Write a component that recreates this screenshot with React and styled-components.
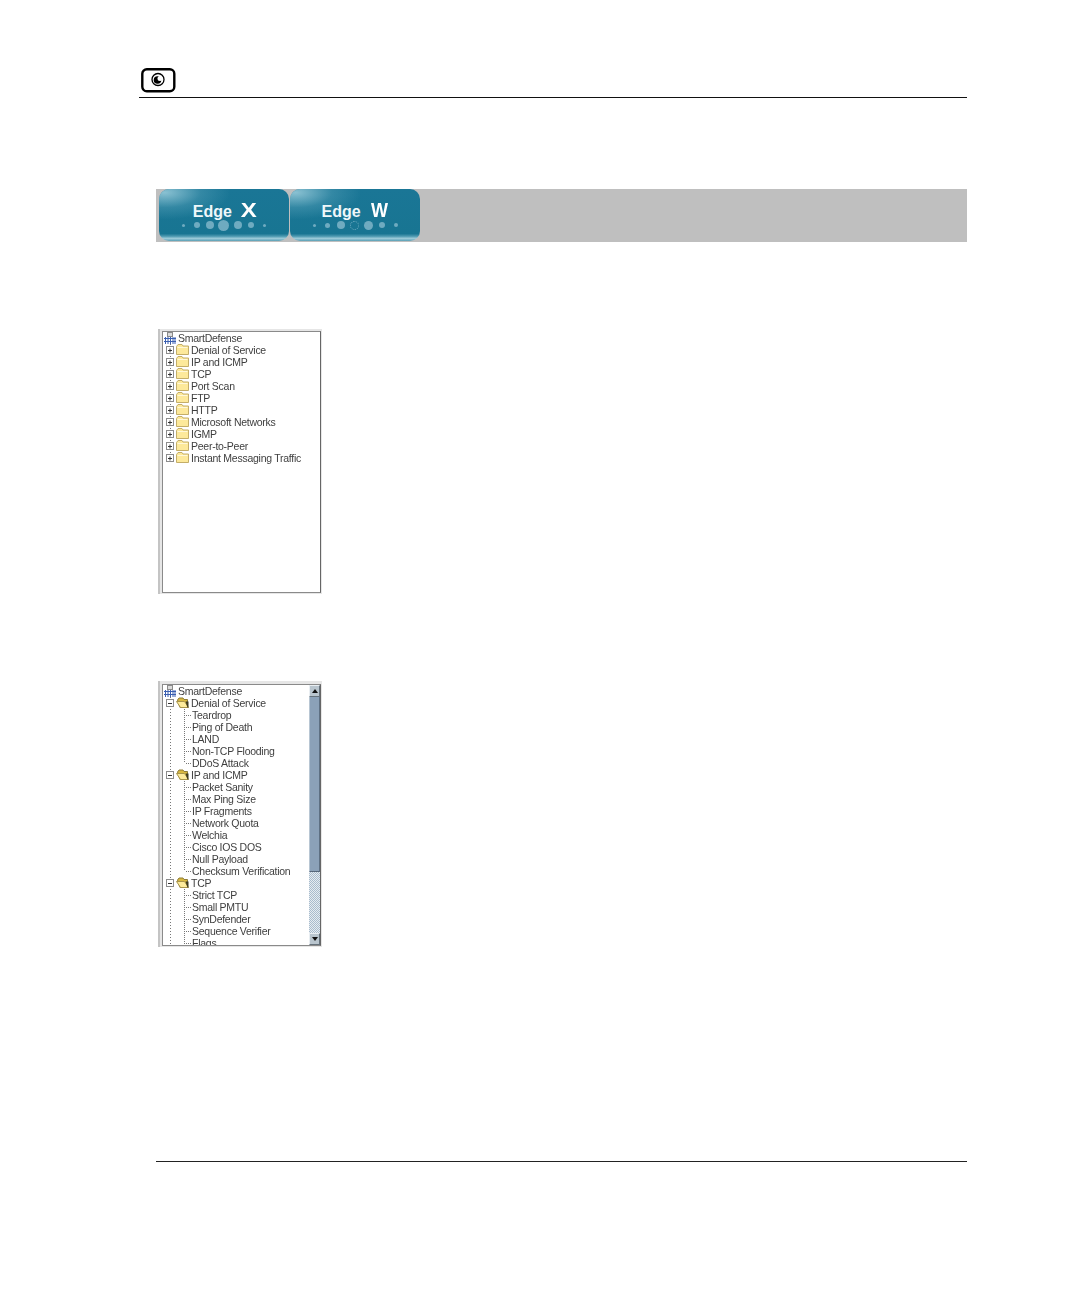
import React from "react";
import styled, { createGlobalStyle } from "styled-components";

const Global = createGlobalStyle`
  html, body { margin: 0; padding: 0; background: #fff; }
  body { font-family: "Liberation Sans", Arial, sans-serif; }
`;

const Page = styled.div`
  width: 1078px;
  height: 1304px;
  box-sizing: border-box;
  padding: 68px 111px 0 0;
  display: flex;
  flex-direction: column;
  overflow: hidden;
`;

const Header = styled.header`
  margin-left: 139px;
  height: 30px;
  box-sizing: border-box;
  border-bottom: 1px solid #111;
  padding-left: 2px;
`;

const Banner = styled.div`
  margin: 91px 0 0 156px;
  height: 53px;
  box-sizing: border-box;
  background: #bfbfbf;
  padding: 0 0 1px 3px;
  display: flex;
  gap: 1px;
`;

const Tab = styled.div`
  position: relative;
  width: 130px;
  height: 52px;
  box-sizing: border-box;
  border-radius: 10px;
  overflow: hidden;
  background: linear-gradient(to bottom, #1a7696 0%, #187592 86%, #4f9ab1 91%, #9ccbd9 95%, #5a9fb5 100%);
  display: flex;
  flex-direction: column;
  align-items: center;
  padding-top: 9px;

  &::before {
    content: "";
    position: absolute;
    left: 0;
    top: 0;
    width: 70px;
    height: 30px;
    background: radial-gradient(ellipse at 8% 12%, rgba(175, 218, 230, 0.75) 0%, rgba(100, 170, 192, 0.35) 40%, rgba(26, 118, 150, 0) 72%);
  }
`;

const TabTitle = styled.div`
  position: relative;
  display: flex;
  align-items: baseline;
  gap: ${(p) => p.$gap}px;
  color: #eef7fa;
  font-size: 16px;
  font-weight: 700;
  line-height: 24px;
`;

const TabLetter = styled.span`
  display: inline-block;
  font-size: 20px;
  color: #fff;
  transform: scaleX(${(p) => p.$scale});
`;

const Dots = styled.div`
  position: relative;
  margin-top: -5px;
  width: 93px;
  height: 12px;
  display: flex;
  justify-content: space-between;
  align-items: center;
`;

const DotCell = styled.span`
  width: 11px;
  display: flex;
  justify-content: center;
`;

const Dot = styled.span`
  width: ${(p) => p.$size}px;
  height: ${(p) => p.$size}px;
  border-radius: 50%;
  box-sizing: border-box;
  background: ${(p) => p.$ring ? "transparent" : "#6fabc0"};
  border: ${(p) => p.$ring ? "1px dotted #6fabc0" : "none"};
`;

const Panel = styled.div`
  width: 164px;
  height: ${(p) => p.$height}px;
  margin: ${(p) => p.$top}px 0 0 158px;
  box-sizing: border-box;
  background: #e6e6e6;
  border-left: 2px solid #c4c4c4;
  padding: ${(p) => p.$pad}px 1px 1px 2px;
  display: flex;
`;

const Inset = styled.div`
  flex: 1;
  min-width: 0;
  box-sizing: border-box;
  background: #fff;
  border: 1px solid #8a8a8a;
  border-right-color: #666;
  display: flex;
  overflow: hidden;
`;

const Tree = styled.div`
  flex: 1;
  min-width: 0;
  overflow: hidden;
  background-image: repeating-linear-gradient(to bottom, #777 0 1px, transparent 1px 3px);
  background-size: 1px ${(p) => p.$guide}px;
  background-position: 7px 12px;
  background-repeat: no-repeat;
`;

const Row = styled.div`
  height: 12px;
  display: flex;
  align-items: center;
  padding-left: ${(p) => p.$indent}px;
  font-size: 10.5px;
  letter-spacing: -0.26px;
  color: #3e3e3e;
  white-space: nowrap;
  filter: blur(0.25px);
`;

const RootIcon = styled.svg`
  width: 12px;
  height: 12px;
  margin-right: 2px;
  flex: none;
`;

const Expander = styled.svg`
  width: 8px;
  height: 8px;
  margin-right: 2px;
  flex: none;
`;

const FolderIcon = styled.svg`
  width: 13px;
  height: 11px;
  margin: 0 2px 1px 0;
  flex: none;
`;

const LeafLine = styled.span`
  position: relative;
  width: 7px;
  height: 12px;
  flex: none;
  margin-right: 1px;

  &::before {
    content: "";
    position: absolute;
    left: 0;
    top: 0;
    width: 1px;
    height: ${(p) => p.$last ? 6 : 12}px;
    background: repeating-linear-gradient(to bottom, #777 0 1px, transparent 1px 2px);
  }

  &::after {
    content: "";
    position: absolute;
    left: 1px;
    top: 6px;
    width: 6px;
    height: 1px;
    background: repeating-linear-gradient(to right, transparent 0 1px, #777 1px 2px);
  }
`;

const Scrollbar = styled.div`
  width: 11px;
  flex: none;
  display: flex;
  flex-direction: column;
`;

const ScrollButton = styled.div`
  height: 12px;
  flex: none;
  box-sizing: border-box;
  background: #b9c5ce;
  border: 1px solid;
  border-color: #e9eef2 #66727c #66727c #e9eef2;
  display: flex;
  align-items: center;
  justify-content: center;

  &::after {
    content: "";
    border-left: 3px solid transparent;
    border-right: 3px solid transparent;
    ${(p) => p.$down ? "border-top: 4px solid #111;" : "border-bottom: 4px solid #111;"}
  }
`;

const ScrollThumb = styled.div`
  height: 175px;
  flex: none;
  box-sizing: border-box;
  background: #8ba1b8;
  border-left: 1px solid #b8c6d3;
  border-bottom: 1px solid #56677a;
  border-right: 1px solid #5e7083;
`;

const ScrollTrack = styled.div`
  flex: 1;
  background-color: #dce4ea;
  background-image: repeating-conic-gradient(#a9bccd 0 25%, #e6ecf1 0 50%);
  background-size: 2px 2px;
`;

const Footer = styled.footer`
  margin: 214px 0 0 156px;
  border-top: 1px solid #222;
`;

function Logo() {
  return (
    <svg width="35" height="25" viewBox="0 0 35 25">
      <rect x="1.3" y="1.3" width="32" height="22" rx="4.5" fill="#fff" stroke="#000" strokeWidth="2.4" />
      <circle cx="17" cy="11.5" r="6" fill="#fff" stroke="#000" strokeWidth="1.3" />
      <circle cx="16.5" cy="12" r="3.8" fill="#000" />
      <circle cx="19" cy="10.4" r="2.5" fill="#fff" />
    </svg>
  );
}

function EdgeTab({ letter, gap, scale, dots }) {
  return (
    <Tab>
      <TabTitle $gap={gap}>
        Edge <TabLetter $scale={scale}>{letter}</TabLetter>
      </TabTitle>
      <Dots>
        {dots.map((d, i) => (
          <DotCell key={i}>
            <Dot $size={d.size} $ring={d.ring} />
          </DotCell>
        ))}
      </Dots>
    </Tab>
  );
}

function Root() {
  return (
    <Row $indent={1}>
      <RootIcon viewBox="0 0 12 12">
        <rect x="3.5" y="0.5" width="5" height="4" fill="#dcdcdc" stroke="#8a8a8a" />
        <path d="M1.5 5V12M4 5V12M6.5 5V12M9 5V12M11 5V12M0 6.5H12M0 9.5H12" stroke="#3a5fb0" fill="none" />
      </RootIcon>
      SmartDefense
    </Row>
  );
}

function Box({ open }) {
  return (
    <Expander viewBox="0 0 8 8">
      <rect x="0.5" y="0.5" width="7" height="7" fill="#fff" stroke="#8c8c8c" />
      <path d={open ? "M2 4.5H6" : "M2 4.5H6M4 2.5V6.5"} stroke="#333" />
    </Expander>
  );
}

function ClosedFolder() {
  return (
    <FolderIcon viewBox="0 0 13 11">
      <path d="M0.5 2.5 L2 0.5H6L7 2H12.5V10.5H0.5Z" fill="#fde99a" stroke="#c4ae68" />
      <path d="M1.5 3.5H11.5" stroke="#fff8d8" />
    </FolderIcon>
  );
}

function OpenFolder() {
  return (
    <FolderIcon viewBox="0 0 13 11">
      <path d="M1.5 3 L3 1H7L8 2.5H11.5V10.5H4Z" fill="#d9b93f" stroke="#8f7d38" />
      <path d="M0.5 4.5H8.5L12.5 10.5H4.5Z" fill="#fdeb9c" stroke="#a8954c" />
      <path d="M9.5 4.5 L12.5 4.5V10.5H11.5Z" fill="#3d3a1e" />
    </FolderIcon>
  );
}

function Branch({ open, label }) {
  return (
    <Row $indent={3}>
      <Box open={open} />
      {open ? <OpenFolder /> : <ClosedFolder />}
      {label}
    </Row>
  );
}

function Leaf({ label, last }) {
  return (
    <Row $indent={21}>
      <LeafLine $last={last} />
      {label}
    </Row>
  );
}

const closedFolders = [
  "Denial of Service", "IP and ICMP", "TCP", "Port Scan", "FTP", "HTTP",
  "Microsoft Networks", "IGMP", "Peer-to-Peer", "Instant Messaging Traffic",
];

const openFolders = [
  { label: "Denial of Service", items: ["Teardrop", "Ping of Death", "LAND", "Non-TCP Flooding", "DDoS Attack"] },
  { label: "IP and ICMP", items: ["Packet Sanity", "Max Ping Size", "IP Fragments", "Network Quota", "Welchia", "Cisco IOS DOS", "Null Payload", "Checksum Verification"] },
  { label: "TCP", items: ["Strict TCP", "Small PMTU", "SynDefender", "Sequence Verifier", "Flags"], more: true },
];

const xDots = [{ size: 3 }, { size: 6 }, { size: 8 }, { size: 11 }, { size: 8 }, { size: 6 }, { size: 3 }];
const wDots = [{ size: 3 }, { size: 5 }, { size: 8 }, { size: 9, ring: true }, { size: 9 }, { size: 6 }, { size: 4 }];

export default function App() {
  return (
    <>
      <Global />
      <Page>
        <Header>
          <Logo />
        </Header>
        <Banner>
          <EdgeTab letter="X" gap={10} scale={1.2} dots={xDots} />
          <EdgeTab letter="W" gap={9} scale={0.9} dots={wDots} />
        </Banner>
        <Panel $top={87} $height={265} $pad={2}>
          <Inset>
            <Tree $guide={120}>
              <Root />
              {closedFolders.map((f) => (
                <Branch key={f} label={f} />
              ))}
            </Tree>
          </Inset>
        </Panel>
        <Panel $top={87} $height={266} $pad={3}>
          <Inset>
            <Tree $guide={260}>
              <Root />
              {openFolders.map((f) => (
                <React.Fragment key={f.label}>
                  <Branch open label={f.label} />
                  {f.items.map((item, i) => (
                    <Leaf key={item} label={item} last={!f.more && i === f.items.length - 1} />
                  ))}
                </React.Fragment>
              ))}
            </Tree>
            <Scrollbar>
              <ScrollButton />
              <ScrollThumb />
              <ScrollTrack />
              <ScrollButton $down />
            </Scrollbar>
          </Inset>
        </Panel>
        <Footer />
      </Page>
    </>
  );
}
